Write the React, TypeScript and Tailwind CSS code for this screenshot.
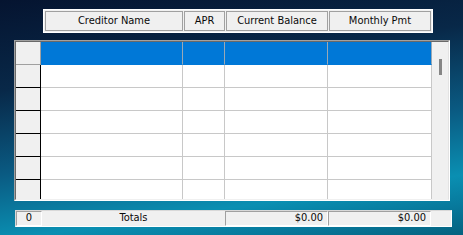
import * as React from 'react'

const font = { fontFamily: '"DejaVu Sans Condensed", "Liberation Sans", sans-serif' }

const headers = [
  { label: 'Creditor Name', w: 'w-[138px]' },
  { label: 'APR', w: 'w-[41px]' },
  { label: 'Current Balance', w: 'w-[102px]' },
  { label: 'Monthly Pmt', w: 'w-[102px]' },
]

const colWidths = ['w-[142px]', 'w-[42px]', 'w-[103px]', 'w-[104px]']

function HeaderBar() {
  return (
    <div className="ml-[43px] mt-[9px] flex h-[24px] w-[390px] gap-[1px] border border-white bg-[#f0f0f0] p-[1px]">
      {headers.map((h) => (
        <div
          key={h.label}
          className={`${h.w} flex h-full items-center justify-center border border-[#a0a0a0] text-[11px] text-[#0a0a0a]`}
        >
          {h.label}
        </div>
      ))}
    </div>
  )
}

function GridRow({ index, selected }: { index: number; selected: boolean }) {
  const last = index === 6
  return (
    <div className={`flex ${last ? 'h-[19px]' : 'h-[23px]'}`}>
      <div
        className={`w-[25px] shrink-0 border-r bg-[#f0f0f0] ${
          last ? '' : 'border-b'
        } ${selected ? 'border-[#a0a0a0]' : 'border-black'}`}
      />
      {colWidths.map((w, i) => (
        <div
          key={i}
          className={`${w} shrink-0 border-r ${last ? '' : 'border-b'} ${
            selected ? 'border-r-[#9aa8b4] border-b-[#0078d7] bg-[#0078d7]' : 'border-[#c8c8c8] bg-white'
          }`}
        />
      ))}
    </div>
  )
}

function Grid() {
  return (
    <div className="ml-[14px] mt-[7px] h-[161px] w-[436px] border border-l-[#a0a0a0] border-t-[#a0a0a0] border-r-white border-b-white">
      <div className="flex h-full w-full border border-l-[#696969] border-t-[#696969] border-r-[#e3e3e3] border-b-[#f0f0f0]">
        <div className="flex w-[416px] flex-col overflow-hidden">
          {Array.from({ length: 7 }).map((_, i) => (
            <GridRow key={i} index={i} selected={i === 0} />
          ))}
        </div>
        <div className="relative w-[16px] bg-[#f0f0f0]">
          <div className="absolute left-[7px] top-[17px] h-[16px] w-[3px] bg-[#858585]" />
        </div>
      </div>
    </div>
  )
}

function Footer() {
  return (
    <div className="ml-[15px] mt-[9px] flex h-[17px] w-[437px] border border-t-[#d8d8d8] border-l-[#d8d8d8] border-r-white border-b-white bg-[#f0f0f0] text-[11px] text-[#0a0a0a]">
      <div className="flex w-[26px] items-center justify-center border border-t-[#a0a0a0] border-l-[#a0a0a0] border-r-white border-b-white">
        0
      </div>
      <div className="flex w-[183px] items-center justify-center">Totals</div>
      <div className="flex w-[103px] items-center justify-end border border-t-[#a0a0a0] border-l-[#a0a0a0] border-r-white border-b-white pr-[4px]">
        $0.00
      </div>
      <div className="flex w-[103px] items-center justify-end border border-t-[#a0a0a0] border-l-[#a0a0a0] border-r-white border-b-white pr-[4px]">
        $0.00
      </div>
    </div>
  )
}

export default function App() {
  return (
    <div
      className="flex h-[235px] w-[463px] flex-col overflow-hidden bg-[linear-gradient(172deg,#051430_0%,#082848_30%,#0a5a82_58%,#0a8fb2_80%,#07799c_90%,#05627f_100%)]"
      style={font}
    >
      <HeaderBar />
      <Grid />
      <Footer />
    </div>
  )
}
